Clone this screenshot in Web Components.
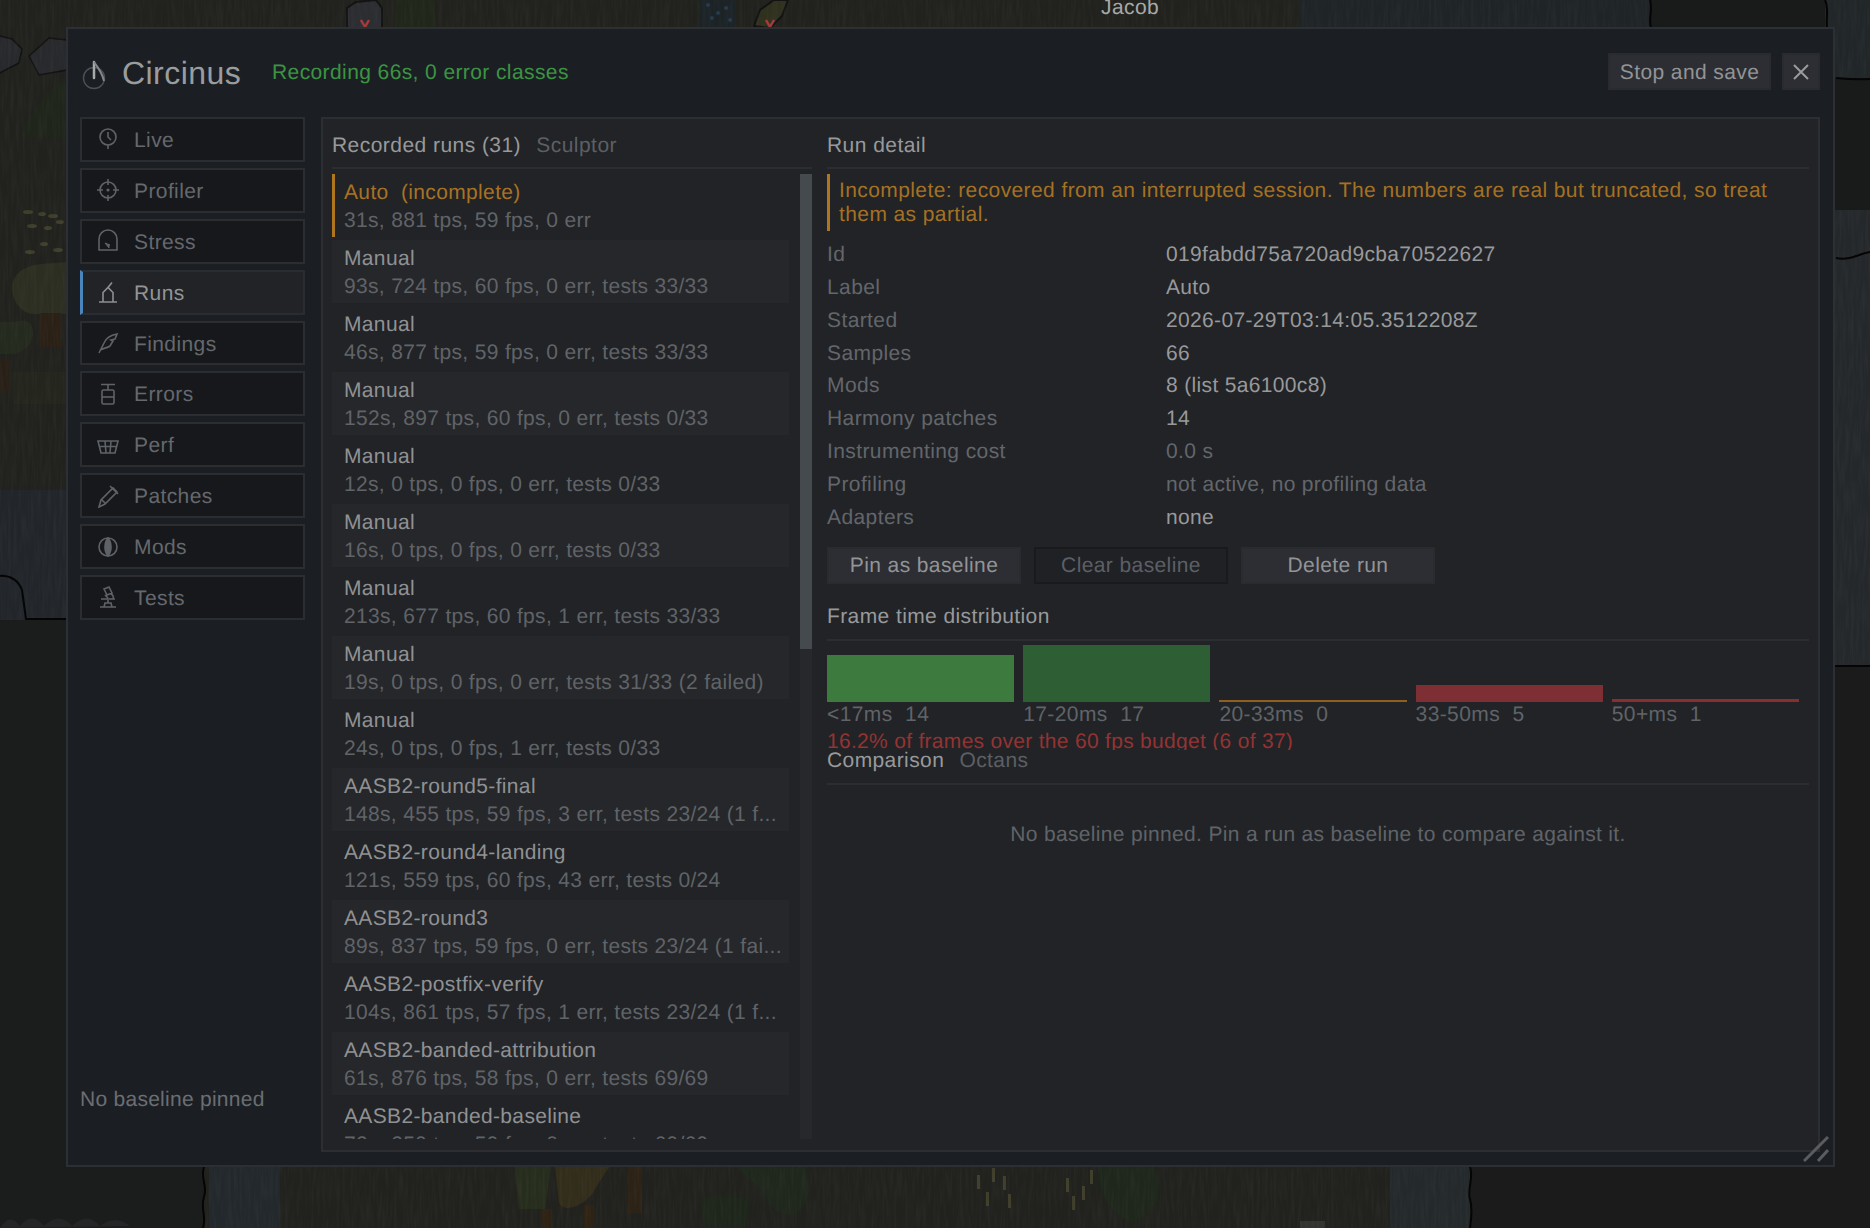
<!DOCTYPE html>
<html>
<head>
<meta charset="utf-8">
<title>Circinus</title>
<style>
  html, body { margin: 0; height: 100%; }
  body {
    width: 1870px; height: 1228px; overflow: hidden; box-sizing: border-box;
    padding: 27px 35px 61px 66px;
    background: #1b1b1b;
    font: 21px/28px "Liberation Sans", Arial, sans-serif;
    letter-spacing: .4px;
    text-rendering: geometricPrecision;
    color: #98999b;
  }
</style>
</head>
<body>
<map-backdrop></map-backdrop>
<circinus-window>
  <nav-item slot="nav" icon="live">Live</nav-item>
  <nav-item slot="nav" icon="profiler">Profiler</nav-item>
  <nav-item slot="nav" icon="stress">Stress</nav-item>
  <nav-item slot="nav" icon="runs" active>Runs</nav-item>
  <nav-item slot="nav" icon="findings">Findings</nav-item>
  <nav-item slot="nav" icon="errors">Errors</nav-item>
  <nav-item slot="nav" icon="perf">Perf</nav-item>
  <nav-item slot="nav" icon="patches">Patches</nav-item>
  <nav-item slot="nav" icon="mods">Mods</nav-item>
  <nav-item slot="nav" icon="tests">Tests</nav-item>

  <runs-panel slot="main">
    <run-list slot="list">
      <run-row warn name="Auto&#160;&#160;(incomplete)" stats="31s, 881 tps, 59 fps, 0 err"></run-row>
      <run-row shade name="Manual" stats="93s, 724 tps, 60 fps, 0 err, tests 33/33"></run-row>
      <run-row name="Manual" stats="46s, 877 tps, 59 fps, 0 err, tests 33/33"></run-row>
      <run-row shade name="Manual" stats="152s, 897 tps, 60 fps, 0 err, tests 0/33"></run-row>
      <run-row name="Manual" stats="12s, 0 tps, 0 fps, 0 err, tests 0/33"></run-row>
      <run-row shade name="Manual" stats="16s, 0 tps, 0 fps, 0 err, tests 0/33"></run-row>
      <run-row name="Manual" stats="213s, 677 tps, 60 fps, 1 err, tests 33/33"></run-row>
      <run-row shade name="Manual" stats="19s, 0 tps, 0 fps, 0 err, tests 31/33 (2 failed)"></run-row>
      <run-row name="Manual" stats="24s, 0 tps, 0 fps, 1 err, tests 0/33"></run-row>
      <run-row shade name="AASB2-round5-final" stats="148s, 455 tps, 59 fps, 3 err, tests 23/24 (1 f..."></run-row>
      <run-row name="AASB2-round4-landing" stats="121s, 559 tps, 60 fps, 43 err, tests 0/24"></run-row>
      <run-row shade name="AASB2-round3" stats="89s, 837 tps, 59 fps, 0 err, tests 23/24 (1 fai..."></run-row>
      <run-row name="AASB2-postfix-verify" stats="104s, 861 tps, 57 fps, 1 err, tests 23/24 (1 f..."></run-row>
      <run-row shade name="AASB2-banded-attribution" stats="61s, 876 tps, 58 fps, 0 err, tests 69/69"></run-row>
      <run-row name="AASB2-banded-baseline" stats="72s, 259 tps, 59 fps, 0 err, tests 69/69"></run-row>
    </run-list>

    <run-detail slot="detail">
      <detail-row label="Id" value="019fabdd75a720ad9cba70522627"></detail-row>
      <detail-row label="Label" value="Auto"></detail-row>
      <detail-row label="Started" value="2026-07-29T03:14:05.3512208Z"></detail-row>
      <detail-row label="Samples" value="66"></detail-row>
      <detail-row label="Mods" value="8 (list 5a6100c8)"></detail-row>
      <detail-row label="Harmony patches" value="14"></detail-row>
      <detail-row label="Instrumenting cost" value="0.0 s" dim></detail-row>
      <detail-row label="Profiling" value="not active, no profiling data" dim></detail-row>
      <detail-row label="Adapters" value="none"></detail-row>
    </run-detail>
  </runs-panel>
</circinus-window>

<script>
// the map behind the window, only its edges show
class MapBackdrop extends HTMLElement {
  connectedCallback() {
    const shadow = this.attachShadow({ mode: "open" });
    shadow.innerHTML = `
    <style>
      :host { position: absolute; left: 0; top: 0; width: 1870px; height: 1228px; overflow: hidden; }
      svg { display: block; }
      .name { position: absolute; left: 1101px; top: -6px; color: #a8a8a8; }
    </style>
    <svg width="1870" height="1228" viewBox="0 0 1870 1228">
      <defs>
        <filter id="rain" x="0" y="0" width="100%" height="100%">
          <feTurbulence type="fractalNoise" baseFrequency="0.35 0.035" numOctaves="2" seed="4"/>
          <feColorMatrix values="0 0 0 0 1  0 0 0 0 1  0 0 0 0 1  0.9 0 0 0 -0.33"/>
        </filter>
      </defs>
      <!-- land -->
      <rect width="1870" height="1228" fill="#21221d"/>
      <rect x="1300" y="0" width="350" height="60" fill="#1f2426"/>
      <rect x="1825" y="0" width="45" height="78" fill="#212628"/>
      <rect x="1835" y="210" width="35" height="456" fill="#25282b"/>
      <rect x="0" y="490" width="66" height="130" fill="#22262a"/>
      <rect x="209" y="1167" width="71" height="61" fill="#22282b"/>
      <rect x="1390" y="1167" width="80" height="61" fill="#24292c"/>

      <!-- rocks and things along the top -->
      <path d="M347 30V8l9-6 20-2 6 8v22z" fill="#2b2d30" stroke="#121212" stroke-width="2"/>
      <path d="M754 26l6-16 14-10h14l-6 16-12 12z" fill="#30301f" stroke="#121212" stroke-width="2"/>
      <path d="M361 20l4 7 4-7M766 20l4 7 4-7" fill="none" stroke="#a3393a" stroke-width="2.5"/>
      <rect x="700" y="0" width="36" height="27" fill="#1c2326"/>
      <g fill="#263a4c"><circle cx="708" cy="5" r="2"/><circle cx="726" cy="8" r="2"/><circle cx="712" cy="18" r="2"/><circle cx="730" cy="20" r="2"/><circle cx="718" cy="13" r="2"/></g>
      <rect x="395" y="0" width="40" height="27" fill="#202619"/>
      <!-- left edge -->
      <path d="M-4 35l16 4 10 10-3 14-23 12z" fill="#28292c" stroke="#121212" stroke-width="1.5"/>
      <path d="M29 56l20-18 18 2v30l-28 5z" fill="#28292c" stroke="#121212" stroke-width="1.5"/>
      <path d="M20 137c4-14 10-14 14-24s16-28 32-32v56z" fill="#20251b"/>
      <g fill="#3f3e2a"><ellipse cx="28" cy="212" rx="5" ry="2"/><ellipse cx="42" cy="214" rx="4" ry="2"/><ellipse cx="53" cy="216" rx="5" ry="2"/><ellipse cx="32" cy="226" rx="5" ry="2"/><ellipse cx="48" cy="228" rx="4" ry="2"/><ellipse cx="60" cy="222" rx="4" ry="2"/><ellipse cx="30" cy="252" rx="5" ry="2"/><ellipse cx="44" cy="244" rx="4" ry="2"/><ellipse cx="58" cy="250" rx="5" ry="2"/></g>
      <path d="M12 288c0-14 12-22 28-24l26-2v52H34c-12 0-22-12-22-26z" fill="#2b2e20"/>
      <rect x="40" y="313" width="22" height="34" fill="#2a2016"/>
      <path d="M-2 322h18c8-4 18 0 17 12-1 10-8 18-20 20H-2z" fill="#252a1e"/>
      <rect x="0" y="360" width="10" height="32" fill="#282016"/>
      <path d="M10 372h56v32H14z" fill="#24261e"/>
      <!-- trees along the bottom -->
      <path d="M515 1167l4 42h26l6-42z" fill="#272d1d"/>
      <path d="M555 1167l4 36c6 12 30 0 36-14l14-22z" fill="#322d1b"/>
      <rect x="628" y="1167" width="14" height="46" fill="#2c2216"/>
      <rect x="542" y="1209" width="10" height="19" fill="#2e2214"/>
      <rect x="584" y="1205" width="10" height="23" fill="#2e2214"/>
      <path d="M736 1167h68c8 18 6 40-10 48-18 0-28-10-30-22z" fill="#1f261c"/>
      <path d="M700 1200c10-6 40-6 50 0l-4 28h-42z" fill="#1e261b"/>
      <path d="M1098 1167h56c12 22 6 42-22 56-20-8-36-30-34-56z" fill="#1f261b"/>
      <g fill="#3f3e2a"><rect x="977" y="1175" width="3" height="14"/><rect x="992" y="1168" width="3" height="14"/><rect x="986" y="1192" width="3" height="14"/><rect x="1003" y="1176" width="3" height="14"/><rect x="1008" y="1194" width="3" height="14"/><rect x="1066" y="1178" width="3" height="14"/><rect x="1082" y="1186" width="3" height="14"/><rect x="1072" y="1196" width="3" height="14"/><rect x="1090" y="1170" width="3" height="14"/></g>
      <rect x="1300" y="1221" width="25" height="7" fill="#33332f"/>
      <!-- rain on the land -->
      <g filter="url(#rain)" opacity=".07"><rect width="1870" height="1228"/></g>
      <!-- dark ground, no rain on it -->
      <rect x="0" y="620" width="66" height="608" fill="#1b1c1c"/>
      <rect x="0" y="1167" width="204" height="61" fill="#1b1c1c"/>
      <rect x="1471" y="1167" width="399" height="61" fill="#1b1b1b"/>
      <rect x="1835" y="666" width="35" height="501" fill="#1b1b1b"/>
      <rect x="1835" y="78" width="35" height="132" fill="#191a1a"/>
      <rect x="1650" y="0" width="175" height="27" fill="#191a1a"/>
      <path d="M0 1228c8-12 14-10 20-2 8-10 16-10 24 0 10-10 20-10 28 0 10-10 20-10 28 0 10-8 20-8 30 0h0z" fill="#252527"/>
      <!-- shore lines -->
      <path d="M-2 576c12-1 20 4 24 14l4 29h42" fill="none" stroke="#050505" stroke-width="2"/>
      <path d="M1836 78c10 1 20 2 34 1M1836 258c14 3 22-4 34-6M1835 666h35" fill="none" stroke="#050505" stroke-width="2"/>
      <path d="M1650 0c3 10-2 20 1 27M1825 0c4 8 1 16 2 27" fill="none" stroke="#050505" stroke-width="2"/>
      <path d="M204 1167c-4 12 4 18 0 30s3 20-1 31M1470 1167c4 10-3 22 0 32s1 20 0 29" fill="none" stroke="#050505" stroke-width="2"/>
    </svg>
    <span class="name">Jacob</span>
    `;
  }
}
customElements.define("map-backdrop", MapBackdrop);

// the window itself: title bar, tab column on the left, panel on the right
class CircinusWindow extends HTMLElement {
  connectedCallback() {
    const shadow = this.attachShadow({ mode: "open" });
    shadow.innerHTML = `
    <style>
      :host {
        position: relative; display: flex; flex-direction: column; box-sizing: border-box;
        width: 1769px; height: 1140px;
        background: #1b1f23; border: 2px solid #2c2f34;
        padding: 0 13px 13px 12px;
      }
      header { flex: none; height: 88px; display: flex; align-items: center; }
      .logo { width: 30px; height: 32px; margin: 4px 12px 0 0; flex: none; display: block; }
      h1 { margin: 0 26px 0 0; width: 124px; font: inherit; font-size: 32px; line-height: 40px; letter-spacing: .45px; color: #9b9c9e; }
      .status { flex: 1; color: #3c9443; }
      .actions { display: flex; gap: 11px; margin-top: -3px; }
      .body { flex: 1; min-height: 0; display: flex; gap: 16px; }
      aside { flex: none; width: 225px; display: flex; flex-direction: column; gap: 6px; }
      .note { margin-top: auto; margin-bottom: 38px; color: #6b6e72; letter-spacing: .27px; }
      .grip { position: absolute; right: 4px; bottom: 3px; width: 26px; height: 26px; }
    </style>
    <header>
      <svg class="logo" viewBox="0 0 30 32">
        <circle cx="14" cy="19" r="10.5" fill="none" stroke="#4d5054" stroke-width="1.4"/>
        <path d="M14 3v16" stroke="#a8a9aa" stroke-width="2.5" fill="none" stroke-linecap="round"/>
        <path d="M14 3c3 4 8 10 10 19" stroke="#85878a" stroke-width="2" fill="none"/>
      </svg>
      <h1>Circinus</h1>
      <span class="status">Recording 66s, 0 error classes</span>
      <div class="actions">
        <rim-button width="163">Stop and save</rim-button>
        <rim-button width="38" plain><svg width="18" height="18" viewBox="0 0 18 18" style="display:block"><path d="M2 2l14 14M16 2L2 16" stroke="#9a9b9d" stroke-width="2" fill="none"/></svg></rim-button>
      </div>
    </header>
    <div class="body">
      <aside>
        <slot name="nav"></slot>
        <div class="note">No baseline pinned</div>
      </aside>
      <slot name="main"></slot>
    </div>
    <svg class="grip" viewBox="0 0 26 26">
      <path d="M1 25L25 1M15 25L25 14" stroke="#5a5c5f" stroke-width="3" fill="none"/>
    </svg>
    `;
  }
}
customElements.define("circinus-window", CircinusWindow);

// icon strokes for the tab column, all on a 24 box
const NAV_ICONS = {
  live: '<circle cx="12" cy="10" r="8"/><path d="M12 5v5l3 3M12 18v4"/>',
  profiler: '<circle cx="12" cy="12" r="8"/><path d="M12 1v6M12 17v6M1 12h6M17 12h6"/><circle cx="12" cy="12" r=".8"/>',
  stress: '<path d="M3 21V10a9 9 0 0 1 18 0v11z"/><path d="M9 14l4 5v-3h1z" fill="currentColor" stroke-width="1"/>',
  runs: '<path d="M3 22h18M7 21.5V12.5l5-5 5 5v9M12 7.5l4-5"/>',
  findings: '<path d="M3 22L8 12C10 7 15 4 21 3L19 8l-4 1 2 1-3 5c-3 2-6 2-10 4"/>',
  errors: '<path d="M5 2.5h14M12 2.5V8"/><rect x="6" y="8" width="12" height="14" rx="1.5"/><path d="M6 15h12"/>',
  perf: '<path d="M2 8h20l-3 12H5zM3.5 13.5h17M9 8l1 12M15 8l-1 12"/>',
  patches: '<path d="M3 23l2-7L17 4l4 4L9 20zM14 2l8 8M6 16l3 3"/>',
  mods: '<circle cx="12" cy="12" r="9"/><path d="M12 3c-4 5-4 13 0 18 4-5 4-13 0-18z" fill="currentColor"/>',
  tests: '<path d="M4 22h16M8 22l1-4h6l1 4M12 18v-3M5 14h14M9 10l3 3M8 4l5-2 3 6-5 2zM15 9c2 1 3 3 2 5"/>'
};

class NavItem extends HTMLElement {
  connectedCallback() {
    const shadow = this.attachShadow({ mode: "open" });
    const active = this.hasAttribute("active");
    shadow.innerHTML = `
    <style>
      :host {
        display: flex; align-items: center; box-sizing: border-box; height: 44.9px;
        background: ${active ? "#212326" : "#16181b"};
        border: 2px solid ${active ? "#2a2c30" : "#2b2d31"};
        ${active ? "border-left: 3px solid #4a86bd;" : ""}
        padding-left: ${active ? 13 : 14}px;
        color: ${active ? "#939496" : "#65686d"};
      }
      svg { width: 24px; height: 24px; margin-right: 14px; flex: none;
            fill: none; stroke: currentColor; stroke-width: 1.6; color: ${active ? "#8d8f92" : "#5f6267"}; }
      span { padding-top: 3px; }
    </style>
    <svg viewBox="0 0 24 24">${NAV_ICONS[this.getAttribute("icon")]}</svg>
    <span><slot></slot></span>
    `;
  }
}
customElements.define("nav-item", NavItem);

class RimButton extends HTMLElement {
  connectedCallback() {
    const shadow = this.attachShadow({ mode: "open" });
    const off = this.hasAttribute("disabled");
    shadow.innerHTML = `
    <style>
      :host {
        display: flex; align-items: center; justify-content: center; box-sizing: border-box;
        width: ${this.getAttribute("width")}px; height: 37px;
        background: ${off ? "#1f2124" : "#2c2e33"};
        border: 2px solid ${off ? "#191a1c" : "#292b2f"};
        color: ${off ? "#5c5f64" : "#939496"};
        ${this.hasAttribute("plain") ? "" : "padding-top: 2px;"}
      }
    </style>
    <slot></slot>
    `;
  }
}
customElements.define("rim-button", RimButton);

// big panel, list of runs on the left and the selected run on the right
class RunsPanel extends HTMLElement {
  connectedCallback() {
    const shadow = this.attachShadow({ mode: "open" });
    shadow.innerHTML = `
    <style>
      :host {
        flex: none; width: 1499px; height: 1035px; box-sizing: border-box;
        display: flex; gap: 15px;
        background: #212326; border: 2px solid #2c2e32;
        padding: 0 9px 0 9px;
      }
      .col { display: flex; flex-direction: column; min-width: 0; }
      .left { width: 480px; flex: none; }
      .right { flex: 1; }
      .head { flex: none; height: 48px; padding-top: 13px; box-sizing: border-box; line-height: 28px; white-space: pre; letter-spacing: .45px; }
      .head span { color: #5c5f64; margin-left: 9px; }
      hr { flex: none; margin: 0; height: 2px; border: 0; background: #2b2d31; }
    </style>
    <div class="col left">
      <div class="head">Recorded runs (31) <span>Sculptor</span></div>
      <hr>
      <slot name="list"></slot>
    </div>
    <div class="col right">
      <div class="head">Run detail</div>
      <hr>
      <slot name="detail"></slot>
    </div>
    `;
  }
}
customElements.define("runs-panel", RunsPanel);

class RunList extends HTMLElement {
  connectedCallback() {
    const shadow = this.attachShadow({ mode: "open" });
    shadow.innerHTML = `
    <style>
      :host { display: flex; gap: 11px; height: 965px; margin-top: 5px; overflow: hidden; }
      .rows { width: 457px; flex: none; display: flex; flex-direction: column; gap: 3px; overflow: hidden; }
      .track { margin-left: auto; width: 12px; background: #26282c; flex: none; }
      .thumb { height: 475px; background: #454a4e; }
    </style>
    <div class="rows"><slot></slot></div>
    <div class="track"><div class="thumb"></div></div>
    `;
  }
}
customElements.define("run-list", RunList);

class RunRow extends HTMLElement {
  connectedCallback() {
    const shadow = this.attachShadow({ mode: "open" });
    const warn = this.hasAttribute("warn");
    shadow.innerHTML = `
    <style>
      :host {
        display: block; flex: none; height: 63px; box-sizing: border-box; padding-top: 5px;
        ${warn ? "border-left: 3px solid #b0761f; padding-left: 9px;" : "padding-left: 12px;"}
        background: ${this.hasAttribute("shade") ? "#25272a" : "transparent"};
        white-space: nowrap;
      }
      .name { color: ${warn ? "#a87224" : "#909193"}; letter-spacing: .35px; }
      .stats { color: #606368; letter-spacing: .33px; }
    </style>
    <div class="name">${this.getAttribute("name")}</div>
    <div class="stats">${this.getAttribute("stats")}</div>
    `;
  }
}
customElements.define("run-row", RunRow);

class DetailRow extends HTMLElement {
  connectedCallback() {
    const shadow = this.attachShadow({ mode: "open" });
    shadow.innerHTML = `
    <style>
      :host { display: grid; grid-template-columns: 339px 1fr; height: 32.87px; align-items: center; color: #63666b; }
      span { padding-top: 3px; }
      .val { color: ${this.hasAttribute("dim") ? "#63666b" : "#98999b"}; letter-spacing: .34px; }
    </style>
    <span>${this.getAttribute("label")}</span>
    <span class="val">${this.getAttribute("value")}</span>
    `;
  }
}
customElements.define("detail-row", DetailRow);

class FrameBar extends HTMLElement {
  connectedCallback() {
    const shadow = this.attachShadow({ mode: "open" });
    shadow.innerHTML = `
    <style>
      :host { display: flex; flex-direction: column; }
      .plot { height: 57px; display: flex; align-items: flex-end; }
      .bar { width: 100%; height: ${this.getAttribute("h")}px; background: ${this.getAttribute("color")}; }
      .lab { height: 26px; line-height: 26px; color: #606368; white-space: pre; }
    </style>
    <div class="plot"><div class="bar"></div></div>
    <div class="lab">${this.getAttribute("label")}</div>
    `;
  }
}
customElements.define("frame-bar", FrameBar);

class RunDetail extends HTMLElement {
  connectedCallback() {
    const shadow = this.attachShadow({ mode: "open" });
    shadow.innerHTML = `
    <style>
      :host { display: block; margin-top: 5px; line-height: 24px; }
      .warn { height: 57px; box-sizing: border-box; border-left: 3px solid #b0761f; padding: 5px 30px 0 9px; color: #a57123; margin-bottom: 6px; }
      .btns { display: flex; gap: 13px; margin-top: 14px; }
      .sec { height: 37px; line-height: 30px; margin-top: 18px; white-space: pre; }
      .sec span { color: #5c5f64; margin-left: 9px; }
      hr { margin: 0; height: 2px; border: 0; background: #2b2d31; }
      .bars { display: grid; grid-template-columns: repeat(5, 187.2px); gap: 9px; margin-top: 4px; }
      .over { height: 22px; overflow: hidden; line-height: 28px; color: #943333; letter-spacing: .3px; }
      .cmp { margin-top: 0; height: 22px; line-height: 22px; }
      .none { margin-top: 36px; text-align: center; color: #606368; line-height: 28px; letter-spacing: .33px; }
    </style>
    <div class="warn">Incomplete: recovered from an interrupted session. The numbers are real but truncated, so treat them as partial.</div>
    <slot></slot>
    <div class="btns">
      <rim-button width="194">Pin as baseline</rim-button>
      <rim-button width="194" disabled>Clear baseline</rim-button>
      <rim-button width="194">Delete run</rim-button>
    </div>
    <div class="sec">Frame time distribution</div>
    <hr>
    <div class="bars">
      <frame-bar h="47" color="#3c7a3e" label="&lt;17ms  14"></frame-bar>
      <frame-bar h="57" color="#2e5f34" label="17-20ms  17"></frame-bar>
      <frame-bar h="2" color="#8f5f1f" label="20-33ms  0"></frame-bar>
      <frame-bar h="17" color="#7e2f33" label="33-50ms  5"></frame-bar>
      <frame-bar h="3" color="#8a2d2f" label="50+ms  1"></frame-bar>
    </div>
    <div class="over">16.2% of frames over the 60 fps budget (6 of 37)</div>
    <div class="sec cmp">Comparison <span>Octans</span></div>
    <hr style="margin-top:11px">
    <div class="none">No baseline pinned. Pin a run as baseline to compare against it.</div>
    `;
  }
}
customElements.define("run-detail", RunDetail);
</script>
</body>
</html>
